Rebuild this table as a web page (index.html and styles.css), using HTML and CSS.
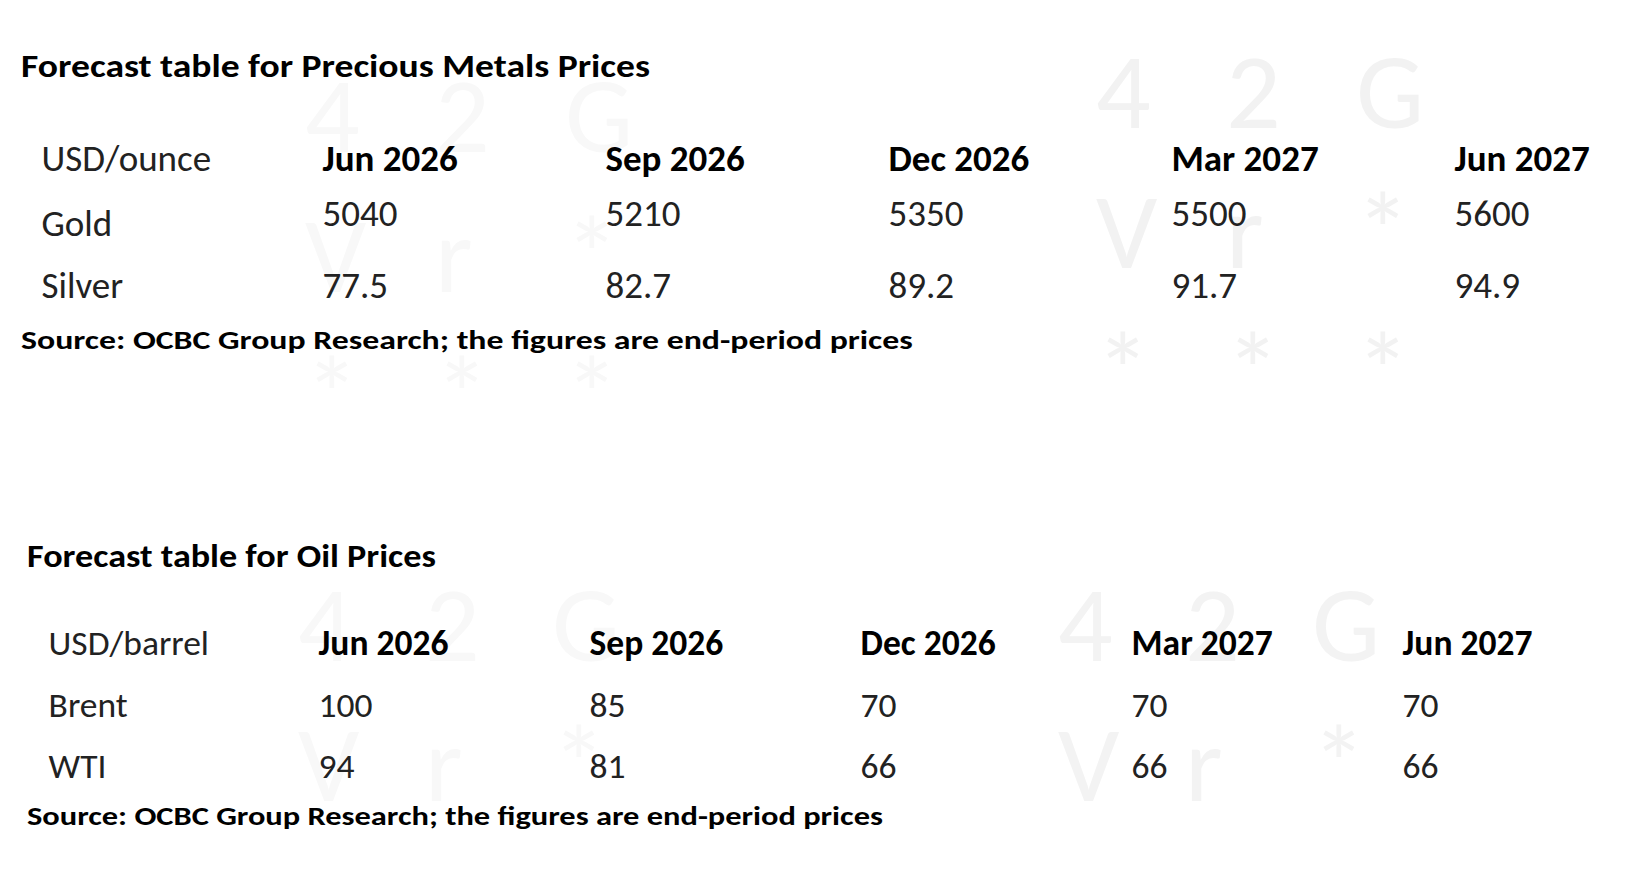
FILE: index.html
```html
<!DOCTYPE html>
<html lang="en">
<head>
<meta charset="utf-8">
<title>Forecast tables</title>
<link rel="stylesheet" href="styles.css">
</head>
<body>
<section class="report report--metals">
  <div class="watermark watermark--metals-left" aria-hidden="true">
    <span>4</span><span>2</span><span>G</span>
    <span>V</span><span>r</span><span>*</span>
    <span>*</span><span>*</span><span>*</span>
  </div>
  <div class="watermark watermark--metals-right" aria-hidden="true">
    <span>4</span><span>2</span><span>G</span>
    <span>V</span><span>r</span><span>*</span>
    <span>*</span><span>*</span><span>*</span>
  </div>
  <h2 class="report__title">Forecast table for Precious Metals Prices</h2>
  <div class="forecast">
    <div class="forecast__row forecast__row--head">
      <span class="forecast__label">USD/ounce</span>
      <span>Jun 2026</span><span>Sep 2026</span><span>Dec 2026</span><span>Mar 2027</span><span>Jun 2027</span>
    </div>
    <div class="forecast__row forecast__row--raised">
      <span class="forecast__label">Gold</span>
      <span>5040</span><span>5210</span><span>5350</span><span>5500</span><span>5600</span>
    </div>
    <div class="forecast__row">
      <span class="forecast__label">Silver</span>
      <span>77.5</span><span>82.7</span><span>89.2</span><span>91.7</span><span>94.9</span>
    </div>
  </div>
  <p class="report__source">Source: OCBC Group Research; the figures are end-period prices</p>
</section>

<section class="report report--oil">
  <div class="watermark watermark--oil-left" aria-hidden="true">
    <span>4</span><span>2</span><span>G</span>
    <span>V</span><span>r</span><span>*</span>
  </div>
  <div class="watermark watermark--oil-right" aria-hidden="true">
    <span>4</span><span>2</span><span>G</span>
    <span>V</span><span>r</span><span>*</span>
  </div>
  <h2 class="report__title">Forecast table for Oil Prices</h2>
  <div class="forecast">
    <div class="forecast__row forecast__row--head">
      <span class="forecast__label">USD/barrel</span>
      <span>Jun 2026</span><span>Sep 2026</span><span>Dec 2026</span><span>Mar 2027</span><span>Jun 2027</span>
    </div>
    <div class="forecast__row">
      <span class="forecast__label">Brent</span>
      <span>100</span><span>85</span><span>70</span><span>70</span><span>70</span>
    </div>
    <div class="forecast__row">
      <span class="forecast__label">WTI</span>
      <span>94</span><span>81</span><span>66</span><span>66</span><span>66</span>
    </div>
  </div>
  <p class="report__source">Source: OCBC Group Research; the figures are end-period prices</p>
</section>
</body>
</html>
```
FILE: styles.css
```css
html, body {
  margin: 0;
  background: #ffffff;
}

body {
  font-family: Carlito, Lato, "Liberation Sans", sans-serif;
  color: #222222;
  overflow: hidden;
}

.report {
  position: relative;
  z-index: 0;
  padding-left: 21px;
}

.report--metals {
  padding-top: 46px;
}

.report--oil {
  margin-top: 181.3px;
  padding-left: 27px;
}

.report__title {
  width: fit-content;
  margin: 0;
  font-weight: 700;
  color: #000000;
  white-space: nowrap;
  transform-origin: 0 50%;
}

.report--metals .report__title {
  font-size: 32.6px;
  line-height: 40px;
  transform: scaleX(1.154);
}

.report--oil .report__title {
  font-size: 31.3px;
  line-height: 38px;
  transform: scaleX(1.155);
}

.forecast {
  display: flex;
  flex-direction: column;
}

.report--metals .forecast {
  --cols: repeat(5, 283px) auto;
  --lh: 46px;
  margin: 49.85px 0 0 18.5px;
  font-size: 37px;
}

.report--oil .forecast {
  --cols: repeat(5, 271px) auto;
  --lh: 44px;
  margin: 45.4px 0 0 20.6px;
  font-size: 35.5px;
}

.forecast__row {
  display: grid;
  grid-template-columns: var(--cols);
  line-height: var(--lh);
  white-space: nowrap;
  align-items: start;
}

.report--metals .forecast__label {
  padding-left: 2px;
}

.report--oil .forecast__label {
  padding-left: 1px;
}

.forecast__row--head {
  font-weight: 700;
  color: #000000;
}

.forecast__row--head .forecast__label {
  font-weight: 400;
  color: #222222;
}

.report--metals .forecast__row--head {
  margin-bottom: 9px;
}

.report--metals .forecast__row--raised {
  margin-bottom: 16.5px;
}

.forecast__row--raised .forecast__label {
  padding-top: 10px;
}

.report--oil .forecast__row--head {
  margin-bottom: 18.1px;
}

.report--oil .forecast__row + .forecast__row:not(:last-child) {
  margin-bottom: 17px;
}

.report__source {
  width: fit-content;
  margin: 0;
  font-weight: 700;
  color: #000000;
  white-space: nowrap;
  transform-origin: 0 50%;
}

.report--metals .report__source {
  margin-top: 14.65px;
  font-size: 26.4px;
  line-height: 32px;
  transform: scaleX(1.28);
}

.report--oil .report__source {
  margin-top: 14px;
  font-size: 25.4px;
  line-height: 30px;
  transform: scaleX(1.277);
}

/* faint background watermark */
.watermark {
  position: absolute;
  z-index: -1;
  display: grid;
  grid-template-columns: repeat(3, 130px);
  grid-auto-rows: 140px;
  font-size: 108px;
  line-height: 140px;
  color: #f3f3f3;
  pointer-events: none;
  user-select: none;
}

.watermark--metals-right {
  top: 20.5px;
  left: 1096px;
  color: #f2f2f2;
}

.watermark--metals-left {
  top: 44.5px;
  left: 305px;
  color: #f8f8f8;
}

.watermark--oil-right {
  top: 17px;
  left: 1058px;
  grid-template-columns: repeat(3, 127px);
  color: #f3f3f3;
}

.watermark--oil-left {
  top: 17px;
  left: 298px;
  grid-template-columns: repeat(3, 127px);
  color: #f8f8f8;
}
```
